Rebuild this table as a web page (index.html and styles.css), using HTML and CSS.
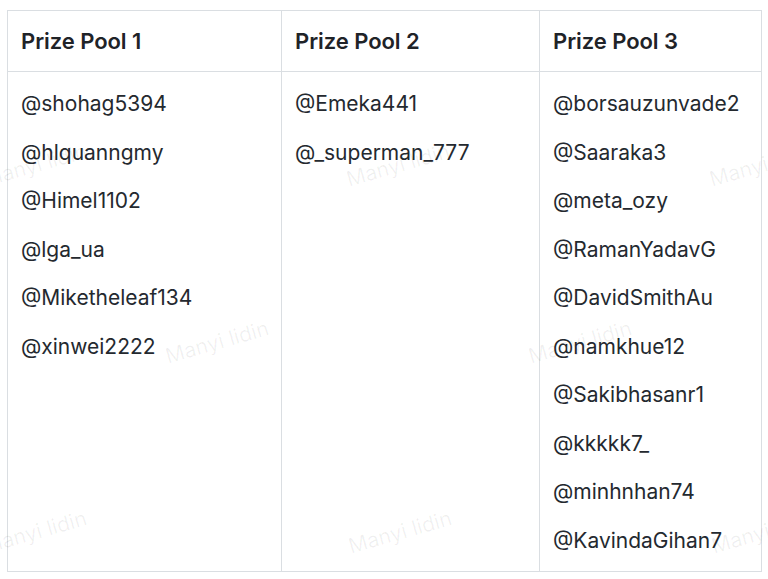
FILE: index.html
```html
<!DOCTYPE html>
<html lang="en">
<head>
<meta charset="utf-8">
<title>Prize Pools</title>
<link rel="stylesheet" href="styles.css">
</head>
<body>
<div class="page">
  <table class="pools">
    <colgroup>
      <col class="c1">
      <col class="c2">
      <col class="c3">
    </colgroup>
    <thead>
      <tr>
        <th>Prize Pool 1</th>
        <th>Prize Pool 2</th>
        <th>Prize Pool 3</th>
      </tr>
    </thead>
    <tbody>
      <tr>
        <td>
          <div class="item">@shohag5394</div>
          <div class="item">@hlquanngmy</div>
          <div class="item">@Himel1102</div>
          <div class="item">@lga_ua</div>
          <div class="item">@Miketheleaf134</div>
          <div class="item">@xinwei2222</div>
        </td>
        <td>
          <div class="item">@Emeka441</div>
          <div class="item">@_superman_777</div>
        </td>
        <td>
          <div class="item">@borsauzunvade2</div>
          <div class="item">@Saaraka3</div>
          <div class="item">@meta_ozy</div>
          <div class="item">@RamanYadavG</div>
          <div class="item">@DavidSmithAu</div>
          <div class="item">@namkhue12</div>
          <div class="item">@Sakibhasanr1</div>
          <div class="item">@kkkkk7_</div>
          <div class="item">@minhnhan74</div>
          <div class="item">@KavindaGihan7</div>
        </td>
      </tr>
    </tbody>
  </table>
  <div class="watermarks" aria-hidden="true">
    <span class="wm w1">Manyi lidin</span>
    <span class="wm w2">Manyi lidin</span>
    <span class="wm w3">Manyi lidin</span>
    <span class="wm w4">Manyi lidin</span>
    <span class="wm w5">Manyi lidin</span>
    <span class="wm w6">Manyi lidin</span>
    <span class="wm w7">Manyi lidin</span>
    <span class="wm w8">Manyi lidin</span>
    <span class="wm w9">Manyi lidin</span>
    <span class="wm w10">Manyi lidin</span>
  </div>
</div>
</body>
</html>
```
FILE: styles.css
```css
html, body {
  margin: 0;
  padding: 0;
  background: #ffffff;
}
.page {
  position: relative;
  width: 768px;
  height: 579px;
  overflow: hidden;
  padding: 10px 7px 0 7px;
  box-sizing: border-box;
  font-family: Inter, "Noto Sans", "Liberation Sans", sans-serif;
  color: #1f2328;
}
.pools {
  border-collapse: collapse;
  table-layout: fixed;
  width: 754px;
}
.c1 { width: 274px; }
.c2 { width: 258px; }
.c3 { width: 222px; }
.pools th,
.pools td {
  border: 1px solid #dadee2;
  text-align: left;
  vertical-align: top;
}
.pools th {
  height: 60px;
  padding: 0 13px;
  vertical-align: middle;
  font-size: 22px;
  font-weight: 600;
  letter-spacing: -0.05px;
}
.pools td {
  padding: 8px 10px 6px 13px;
  font-size: 21px;
  font-weight: 400;
  color: #24292f;
}
.item {
  line-height: 48.5px;
  white-space: nowrap;
}
.watermarks {
  position: absolute;
  inset: 0;
  pointer-events: none;
}
.wm {
  position: absolute;
  font-size: 21px;
  color: rgba(0, 0, 0, 0.06);
  transform: translate(-50%, -50%) rotate(-16deg);
  white-space: nowrap;
  font-family: Inter, "Noto Sans", sans-serif;
}
.w1 { left: 217px; top: -22px; }
.w2 { left: 580px; top: -22px; }
.w3 { left: 35px; top: 165px; }
.w4 { left: 398px; top: 165px; }
.w5 { left: 761px; top: 165px; }
.w6 { left: 217px; top: 342px; }
.w7 { left: 580px; top: 342px; }
.w8 { left: 35px; top: 532px; }
.w9 { left: 400px; top: 532px; }
.w10 { left: 763px; top: 532px; }
```
